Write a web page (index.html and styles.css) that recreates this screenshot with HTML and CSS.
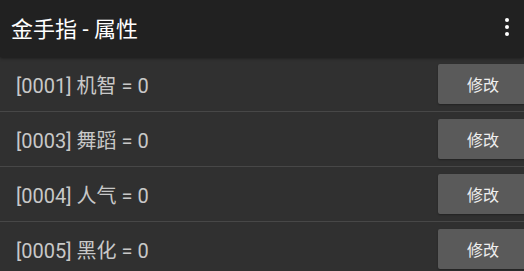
FILE: index.html
```html
<!DOCTYPE html>
<html lang="zh">
  <head>
    <meta charset="UTF-8" />
    <title>金手指 - 属性</title>
    <link rel="stylesheet" href="styles.css">
  </head>
  <body>
    <header class="toolbar">
      <h1>金手指 - 属性</h1>
      <div class="menu">
        <span></span><span></span><span></span>
      </div>
    </header>

    <ul class="attrs">
      <li class="attr">
        <span class="attr-name">[0001] 机智 = 0</span>
        <button>修改</button>
      </li>
      <li class="attr">
        <span class="attr-name">[0003] 舞蹈 = 0</span>
        <button>修改</button>
      </li>
      <li class="attr">
        <span class="attr-name">[0004] 人气 = 0</span>
        <button>修改</button>
      </li>
      <li class="attr">
        <span class="attr-name">[0005] 黑化 = 0</span>
        <button>修改</button>
      </li>
    </ul>
  </body>
</html>
```

FILE: styles.css
```css
body {
  font-family: Roboto, "Noto Sans CJK SC", sans-serif;
  margin: 0;
  padding: 0;
  background-color: #303030;
  overflow: hidden;
}

.toolbar {
  position: relative;
  z-index: 1;
  height: 57px;
  display: flex;
  align-items: center;
  padding: 0 0 4px 11px;
  box-sizing: border-box;
  background-color: #212121;
  color: #fff;
  box-shadow: 0 1px 3px rgba(0, 0, 0, 0.5);
}

.toolbar h1 {
  margin: 0;
  font-size: 22px;
  font-weight: normal;
}

.menu {
  margin-left: auto;
  width: 4px;
  margin-right: 15px;
  display: flex;
  flex-direction: column;
  gap: 3px;
}

.menu span {
  width: 4px;
  height: 4px;
  border-radius: 50%;
  background-color: #fff;
}

.attrs {
  list-style-type: none;
  margin: 0;
  padding: 0;
}

.attr {
  height: 54px;
  display: flex;
  align-items: center;
  padding-left: 16px;
  border-bottom: 1px solid #474747;
}

.attr-name {
  color: #c8c8c8;
  font-size: 20px;
}

.attr button {
  margin-left: auto;
  margin-right: -4px;
  width: 90px;
  height: 40px;
  border: none;
  border-radius: 2px;
  background-color: #5a5a5a;
  color: #eee;
  font-family: Roboto, "Noto Sans CJK SC", sans-serif;
  font-size: 16px;
  box-shadow: 0 1px 2px rgba(0, 0, 0, 0.3);
}
```
